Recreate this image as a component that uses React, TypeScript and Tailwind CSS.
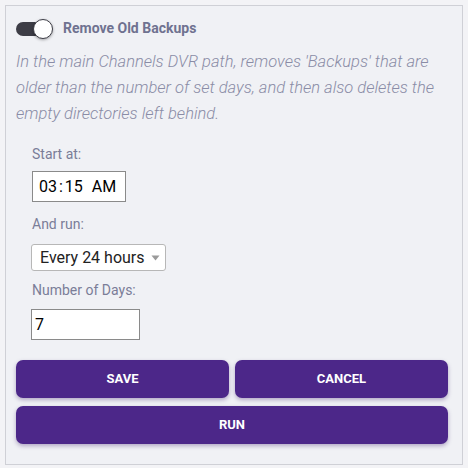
import React from "react";

const btn =
  "flex h-[38px] items-center justify-center rounded-[7px] bg-[#4c2789] text-[13px] font-bold uppercase text-white shadow-[0_2px_4px_rgba(60,30,110,0.35)]";

export default function App() {
  return (
    <div className="min-h-[468px] bg-[#f3f3f6] p-[5px] font-['Roboto',sans-serif]">
      <div className="h-[460px] border border-[#cfd0d6] bg-[#f0f1f5] pl-[10px] pr-[14px] pt-[12px]">
        <div className="flex items-center gap-[10px]">
          <div className="relative h-[20px] w-[37px]">
            <div className="absolute left-0 top-[3px] h-[14px] w-[34px] rounded-full bg-[#3d3d46]" />
            <div className="absolute right-0 top-0 h-[20px] w-[20px] rounded-full border border-[#3d3d46] bg-white shadow-[0_1px_3px_rgba(0,0,0,0.35)]" />
          </div>
          <span className="text-[14px] font-bold text-[#6f7290]">Remove Old Backups</span>
        </div>
        <p className="-mr-[6px] mt-[10px] text-[16.5px] font-light italic leading-[26px] text-[#8a8ca6]">
          In the main Channels DVR path, removes 'Backups' that are older than the number of set
          days, and then also deletes the empty directories left behind.
        </p>
        <div className="mt-[17px] flex flex-col px-[16px] text-[14px] text-[#7a7d98]">
          <label>Start at:</label>
          <div className="mt-[6px] flex h-[31px] w-[94px] items-center border border-[#8a8a8a] bg-white pl-[6px] text-[16px] text-black">
            03<span className="mx-[2px]">:</span>15<span className="ml-[9px]">AM</span>
          </div>
          <label className="mt-[12px]">And run:</label>
          <div className="-ml-px mt-[9px] flex h-[27px] w-[135px] items-center justify-between rounded-[3px] border border-[#b7b7b7] bg-white pl-[8px] pr-[5px] text-[16px] text-[#222]">
            <span>Every 24 hours</span>
            <svg width="9" height="6" viewBox="0 0 9 6">
              <path d="M0.5 0.5h8L4.5 5.5z" fill="#9a9a9a" />
            </svg>
          </div>
          <label className="mt-[9px]">Number of Days:</label>
          <div className="-ml-px mt-[8px] flex h-[31px] w-[109px] items-center border border-[#8a8a8a] bg-white pl-[3px] text-[16px] text-black">
            7
          </div>
        </div>
        <div className="mt-[20px] grid grid-cols-2 gap-[6px]">
          <button className={btn}>Save</button>
          <button className={btn}>Cancel</button>
        </div>
        <button className={btn + " mt-[8px] w-full"}>Run</button>
      </div>
    </div>
  );
}
